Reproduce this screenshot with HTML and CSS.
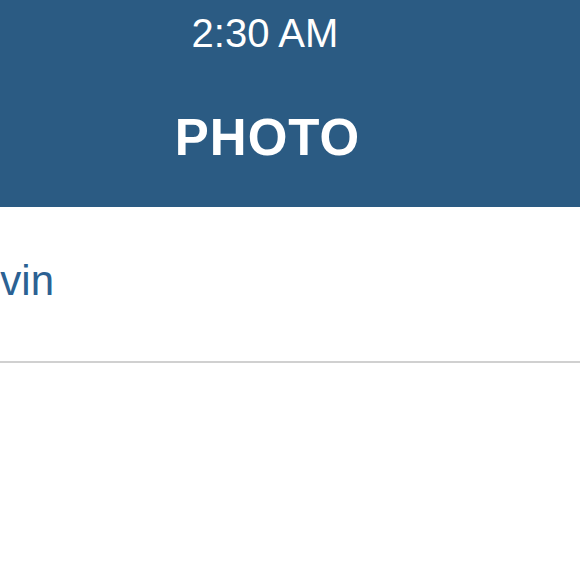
FILE: index.html
```html
<!DOCTYPE html>
<html lang="en">
<head>
  <meta charset="UTF-8" />
  <meta name="viewport" content="width=device-width, initial-scale=1.0"/>
  <title>Photo</title>
  <link rel="stylesheet" href="styles.css">
</head>
<body>

  <div class="screen">
    <div class="header">
      <div class="status-bar">2:30 AM</div>
      <h1 class="title">PHOTO</h1>
    </div>

    <ul class="list">
      <li class="list-item">Kevin</li>
    </ul>
  </div>

</body>
</html>
```

FILE: styles.css
```css
* { box-sizing: border-box; }

body {
  margin: 0;
  font-family: "Liberation Sans", Arial, sans-serif;
  background: #fff;
  overflow: hidden;
}

.screen {
  width: 658px;
  margin-left: -64px;
}

.header {
  background: #2b5b83;
  color: #fff;
  text-align: center;
  height: 207px;
}

.status-bar {
  font-size: 40px;
  line-height: 46px;
  padding-top: 10px;
  height: 64px;
}

.title {
  margin: 0;
  padding-top: 44px;
  padding-left: 5px;
  font-size: 51px;
  line-height: 60px;
  font-weight: bold;
  letter-spacing: 1px;
}

.list {
  list-style: none;
  margin: 0;
  padding: 0;
}

.list-item {
  padding: 50px 13px 56px;
  font-size: 42px;
  line-height: 48px;
  color: #2b6193;
  border-bottom: 2px solid #d0d0d0;
}
```
